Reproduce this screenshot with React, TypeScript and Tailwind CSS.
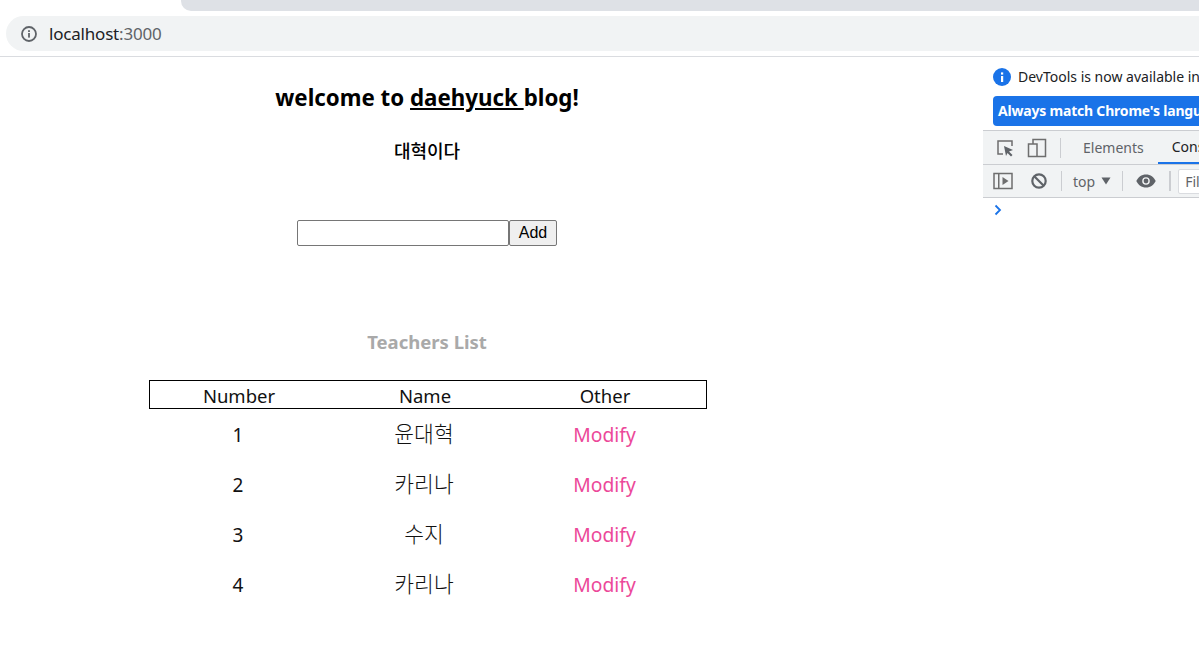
import React from 'react'

const teachers = [
    { id: 1, name: '윤대혁' },
    { id: 2, name: '카리나' },
    { id: 3, name: '수지' },
    { id: 4, name: '카리나' },
]

const font = "font-['Noto_Sans','Noto_Sans_CJK_KR',sans-serif]"

const BrowserBar = () => (
    <div className="h-[57px] border-b border-[#dadce0] bg-white">
        <div className="pl-[181px] h-[11px]">
            <div className="h-[11px] bg-[#dee1e6] rounded-bl-[10px]" />
        </div>
        <div className="mt-[5px] ml-[6px] h-[35px] rounded-l-full bg-[#f1f3f4] flex items-center pl-[14px]">
            <svg width="18" height="18" viewBox="0 0 18 18" fill="none">
                <circle cx="9" cy="9" r="7" stroke="#5f6368" strokeWidth="1.8" />
                <rect x="8.1" y="8" width="1.8" height="4.6" fill="#5f6368" />
                <rect x="8.1" y="5.2" width="1.8" height="1.8" fill="#5f6368" />
            </svg>
            <p className="ml-[11px] text-[17px] text-[#202124] font-['Noto_Sans',sans-serif] tracking-[-0.2px]">
                localhost<span className="text-[#5f6368]">:3000</span>
            </p>
        </div>
    </div>
)

const TeacherTable = () => (
    <div className="w-[558px] mt-[24px] ml-[149px] text-[19px] text-[#111] text-center">
        <div className="border border-black h-[29px] grid grid-cols-[178px_194px_166px] leading-[30px] text-[18.5px]">
            <p>Number</p>
            <p>Name</p>
            <p>Other</p>
        </div>
        <div className="pt-[1px]">
            {teachers.map((t) => (
                <div key={t.id} className="h-[50px] grid grid-cols-[178px_194px_166px] items-center">
                    <p>{t.id}</p>
                    <p className="-mt-[2px] text-[21.500px] font-light">{t.name}</p>
                    <p className="text-[#ec4899] text-[19.300px] pl-[1px]">Modify</p>
                </div>
            ))}
        </div>
    </div>
)

const DevTools = () => (
    <div className="w-[216px] shrink-0 overflow-hidden font-['Noto_Sans',sans-serif] whitespace-nowrap">
        <div className="h-[39px] flex items-center pl-[10px] text-[14px] text-[#202124]">
            <svg className="shrink-0" width="18" height="18" viewBox="0 0 18 18">
                <circle cx="9" cy="9" r="9" fill="#1a73e8" />
                <rect x="8" y="8" width="2.2" height="6" fill="#fff" />
                <rect x="8" y="4.4" width="2.2" height="2.2" fill="#fff" />
            </svg>
            <span className="ml-[7px]">DevTools is now available in</span>
        </div>
        <div className="ml-[10px] h-[30px] rounded-l-[4px] bg-[#1a73e8] text-white text-[14px] font-bold leading-[30px] pl-[5px] tracking-[-0.2px]">
            Always match Chrome's language
        </div>
        <div className="mt-[4px] h-[35px] bg-[#f1f3f4] border-y border-[#cbcdd1] flex items-center text-[14px] text-[#5f6368]">
            <svg className="ml-[13px] shrink-0" width="18" height="18" viewBox="0 0 18 18" fill="none">
                <path d="M7 15H2V2h14v5" stroke="#6e6e6e" strokeWidth="1.5" />
                <path d="M8 7l9 4-4 1.5 3.500 3.500-1.500 1.500-3.500-3.500L10 17z" fill="#5f6368" />
            </svg>
            <svg className="ml-[13px] shrink-0" width="20" height="20" viewBox="0 0 20 20" fill="none">
                <path d="M6 6V1.500h12.500v17H1.500V6H10v12.500" stroke="#6e6e6e" strokeWidth="1.500" />
            </svg>
            <div className="ml-[13px] w-[1px] h-[20px] shrink-0 bg-[#cbcdd1]" />
            <span className="ml-[22px]">Elements</span>
            <div className="ml-[14px] h-full border-b-2 border-[#1a73e8] pl-[14px] leading-[31px] text-[#202124] w-[60px] shrink-0">Console</div>
        </div>
        <div className="h-[33px] bg-[#f1f3f4] border-b border-[#cbcdd1] flex items-center text-[14px] text-[#5f6368]">
            <svg className="ml-[10px] shrink-0" width="20" height="18" viewBox="0 0 20 18" fill="none">
                <rect x="1" y="1.500" width="18" height="15" stroke="#6e6e6e" strokeWidth="1.500" />
                <rect x="5" y="2" width="1.500" height="14" fill="#6e6e6e" />
                <path d="M9.500 5l6 4-6 4z" fill="#6e6e6e" />
            </svg>
            <svg className="ml-[17px] shrink-0" width="18" height="18" viewBox="0 0 18 18" fill="none">
                <circle cx="9" cy="9" r="6.700" stroke="#5f6368" strokeWidth="2.200" />
                <path d="M4.500 4.500l9 9" stroke="#5f6368" strokeWidth="2.200" />
            </svg>
            <div className="ml-[13px] w-[1px] h-[20px] shrink-0 bg-[#cbcdd1]" />
            <span className="ml-[11px]">top</span>
            <svg className="ml-[6px] shrink-0" width="10" height="8" viewBox="0 0 10 8">
                <path d="M0.500 0.500h9L5 7.500z" fill="#5f6368" />
            </svg>
            <div className="ml-[11px] w-[1px] h-[20px] shrink-0 bg-[#cbcdd1]" />
            <svg className="ml-[13px] shrink-0" width="20" height="14" viewBox="0 0 20 14">
                <path d="M10 0.500C5.500 0.500 2 3.200 0.300 7 2 10.800 5.500 13.500 10 13.500S18 10.800 19.700 7C18 3.200 14.500 0.500 10 0.500z" fill="#5f6368" />
                <circle cx="10" cy="7" r="3.800" fill="#f1f3f4" />
                <circle cx="10" cy="7" r="2.400" fill="#5f6368" />
            </svg>
            <div className="ml-[13px] w-[2px] h-[20px] shrink-0 bg-[#cbcdd1]" />
            <div className="ml-[7px] h-[25px] w-[30px] shrink-0 bg-white border border-[#dadce0] rounded-l-[2px] pl-[6px] leading-[23px]">Filter</div>
        </div>
        <svg className="ml-[11px] mt-[6px]" width="8" height="12" viewBox="0 0 8 12" fill="none">
            <path d="M1.500 1.500L6 6l-4.500 4.500" stroke="#1a73e8" strokeWidth="1.800" />
        </svg>
    </div>
)

const App = () => {
    return (
        <div className={`w-[1199px] h-[649px] overflow-hidden bg-white text-black ${font}`}>
            <BrowserBar />
            <div className="flex">
                <div className="w-[983px] shrink-0">
                    <div className="w-[854px] text-center">
                        <h1 className="pt-[25px] text-[22.300px] font-bold leading-[32px]">
                            welcome to <span className="underline">daehyuck </span>blog!
                        </h1>
                        <p className="mt-[25px] text-[18px] font-medium leading-[24px]">대혁이다</p>
                        <div className="mt-[57px] flex justify-center items-center h-[26px] font-['Liberation_Sans',sans-serif]">
                            <input className="w-[212px] h-[26px] bg-white border border-[#767676] rounded-[2px]" />
                            <button className="w-[48px] h-[26px] bg-[#efefef] border border-[#767676] rounded-[2px] text-[16px]">Add</button>
                        </div>
                        <h2 className="mt-[82px] text-[#a9a9a9] text-[18.500px] font-bold leading-[28px]">Teachers List</h2>
                    </div>
                    <TeacherTable />
                </div>
                <DevTools />
            </div>
        </div>
    )
}

export default App
